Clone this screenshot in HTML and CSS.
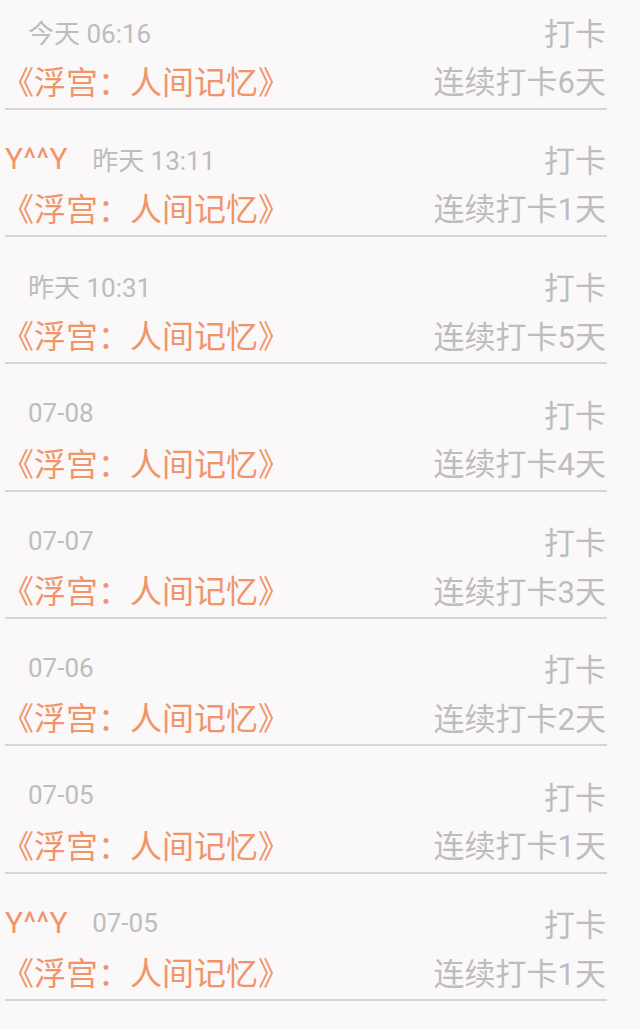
FILE: index.html
```html
<!DOCTYPE html>
<html lang="zh-CN">
<head>
    <meta charset="UTF-8">
    <meta name="viewport" content="width=device-width, initial-scale=1.0">
    <title>打卡记录</title>
    <link rel="stylesheet" href="styles.css">
</head>
<body>

    <ul class="record-list" id="record-list"></ul>

    <script>
        var records = [
            { name: '', time: '今天 06:16', days: 6 },
            { name: 'Y^^Y', time: '昨天 13:11', days: 1 },
            { name: '', time: '昨天 10:31', days: 5 },
            { name: '', time: '07-08', days: 4 },
            { name: '', time: '07-07', days: 3 },
            { name: '', time: '07-06', days: 2 },
            { name: '', time: '07-05', days: 1 },
            { name: 'Y^^Y', time: '07-05', days: 1 }
        ];

        var list = document.getElementById('record-list');

        records.forEach(function (rec) {
            var meta = rec.name
                ? `<span class="user">${rec.name}</span><span class="time">${rec.time}</span>`
                : `<span class="time no-user">${rec.time}</span>`;

            list.innerHTML += `<li class="record">
                <div class="record-top">
                    <div class="meta">${meta}</div>
                    <span class="action">打卡</span>
                </div>
                <div class="record-bottom">
                    <span class="book">《浮宫：人间记忆》</span>
                    <span class="streak">连续打卡${rec.days}天</span>
                </div>
            </li>`;
        });
    </script>

</body>
</html>
```

FILE: styles.css
```css
body {
    margin: 0;
    background-color: #faf8f9;
    font-family: Roboto, "Noto Sans CJK SC", sans-serif;
}

.record-list {
    list-style: none;
    margin: 0;
    padding: 11px 0 0 5px;
    width: 602px;
}

.record {
    border-bottom: 2px solid #d6d6d6;
    padding-bottom: 8px;
    margin-bottom: 28.9px;
}

.record-top,
.record-bottom {
    display: flex;
    justify-content: space-between;
    align-items: center;
    height: 40px;
}

.record-bottom {
    margin-top: 8.5px;
}

.meta {
    display: flex;
    align-items: center;
}

.user {
    color: #f0956a;
    font-size: 30px;
    letter-spacing: 0.5px;
    margin-right: 24px;
}

.time {
    color: #bdbdbd;
    font-size: 26px;
}

.time.no-user {
    margin-left: 23px;
}

.action,
.streak {
    color: #bdbdbd;
    font-size: 31px;
    margin-right: 1px;
}

.book {
    color: #f0956a;
    font-size: 32px;
    margin-left: -3px;
}
```
